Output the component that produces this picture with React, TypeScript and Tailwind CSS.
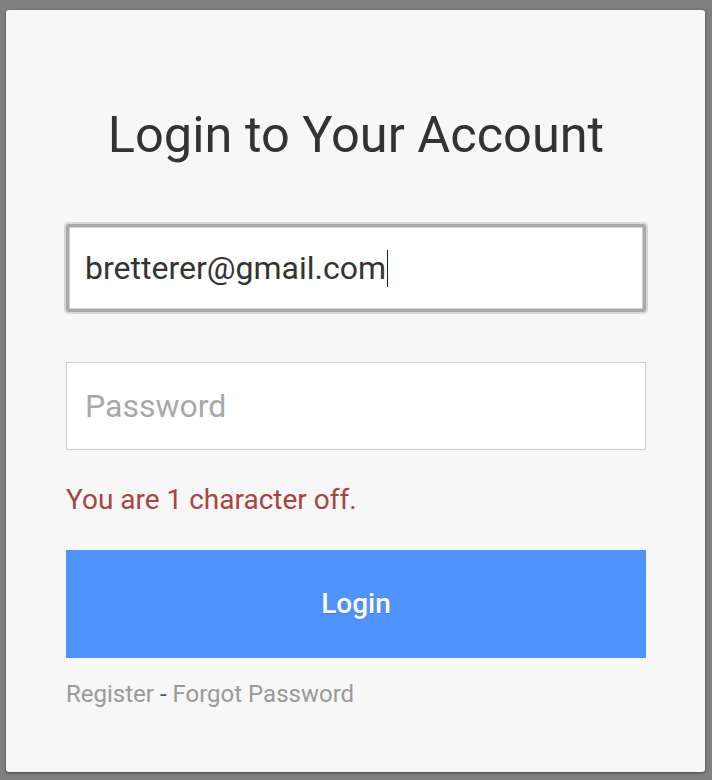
import React from 'react';

const App = () => {
  return (
    <div className="min-h-[780px] bg-[#7f7f7f] pt-[10px] pl-[6px]" style={{ fontFamily: 'Roboto, "Liberation Sans", sans-serif' }}>
      <div className="w-[699px] h-[762px] bg-[#f7f7f7] rounded-[3px] shadow-[0_1px_3px_rgba(0,0,0,0.45)] pt-[97px] pl-[60px]">
        <h1 className="w-[580px] text-center text-[50.5px] leading-[56px] text-[#333333] font-normal">
          Login to Your Account
        </h1>

        <div className="mt-[61px] w-[580px] h-[88px] flex items-center rounded-[3px] bg-white border-[3px] border-[#a9a9a9] shadow-[0_0_0_2px_#d8d8d8,inset_0_0_0_1px_#d2d2d2] pl-[16px] text-[32px] text-[#333333]">
          <span>bretterer@gmail.com</span>
          <span className="inline-block w-px h-[37px] bg-[#222222] ml-[1px]" />
        </div>

        <div className="mt-[50px] w-[580px] h-[88px] flex items-center bg-white border border-[#cfcfcf] pl-[18px] text-[32px] text-[#a9a9a9]">
          Password
        </div>

        <p className="mt-[34px] text-[28px] leading-[32px] text-[#a94442]">You are 1 character off.</p>

        <button className="mt-[34px] w-[580px] h-[108px] bg-[#5093fc] text-white text-[28px] font-medium [text-shadow:0_1px_1px_rgba(0,0,0,0.15)]">
          Login
        </button>

        <div className="mt-[22px] text-[24px] leading-[28px] text-[#9a9a9a]">
          <a href="#">Register</a>
          <span className="text-[#555555]"> - </span>
          <a href="#">Forgot Password</a>
        </div>
      </div>
    </div>
  );
};

export default App;
